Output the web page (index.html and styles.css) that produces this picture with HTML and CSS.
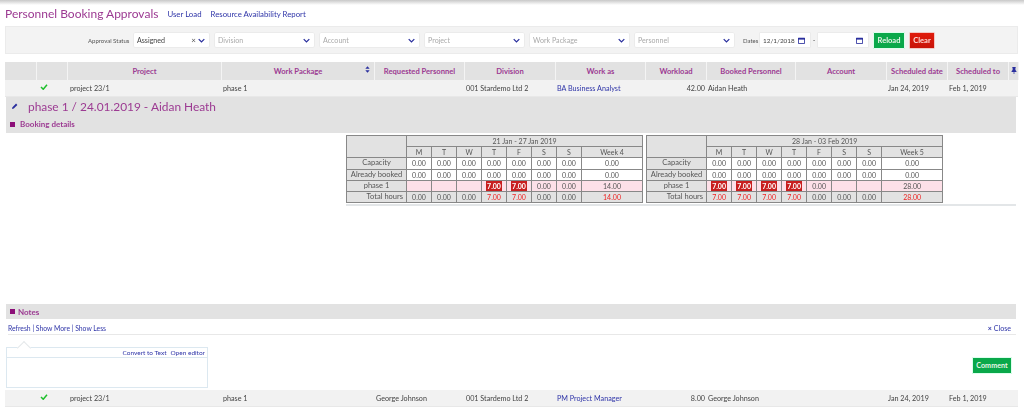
FILE: index.html
```html
<!DOCTYPE html>
<html lang="en">
<head>
<meta charset="utf-8">
<title>Personnel Booking Approvals</title>
<link rel="stylesheet" href="styles.css">
</head>
<body>
<div class="topshade"></div>
<header class="titlebar">
  <h1>Personnel Booking Approvals</h1>
  <a class="toplink first">User Load</a>
  <a class="toplink">Resource Availability Report</a>
</header>
<section class="filters">
  <span class="flabel status">Approval Status</span>
  <div class="select w75 value"><span class="sv">Assigned</span><span class="x">×</span><svg class="chev" viewBox="0 0 10 6"><path d="M1 1l4 4 4-4"/></svg></div>
  <div class="select"><span>Division</span><svg class="chev" viewBox="0 0 10 6"><path d="M1 1l4 4 4-4"/></svg></div>
  <div class="select"><span>Account</span><svg class="chev" viewBox="0 0 10 6"><path d="M1 1l4 4 4-4"/></svg></div>
  <div class="select"><span>Project</span><svg class="chev" viewBox="0 0 10 6"><path d="M1 1l4 4 4-4"/></svg></div>
  <div class="select"><span>Work Package</span><svg class="chev" viewBox="0 0 10 6"><path d="M1 1l4 4 4-4"/></svg></div>
  <div class="select"><span>Personnel</span><svg class="chev" viewBox="0 0 10 6"><path d="M1 1l4 4 4-4"/></svg></div>
  <span class="flabel dates">Dates</span>
  <div class="date"><span>12/1/2018</span><svg class="cal" viewBox="0 0 8 8"><path d="M.5 1.5h7v6h-7z" fill="none" stroke="#2a2f9e"/><path d="M0 1h8v2H0z" fill="#2a2f9e"/></svg></div>
  <span class="dash">-</span>
  <div class="date"><span></span><svg class="cal" viewBox="0 0 8 8"><path d="M.5 1.5h7v6h-7z" fill="none" stroke="#2a2f9e"/><path d="M0 1h8v2H0z" fill="#2a2f9e"/></svg></div>
  <button class="btn green reload">Reload</button>
  <button class="btn red clear">Clear</button>
</section>
<div class="grid-row head">
  <div></div><div></div>
  <div>Project</div>
  <div class="sortable">Work Package<svg class="sort" viewBox="0 0 6 8"><path d="M3 0l2.6 3H.4zM3 8L.4 5h5.2z"/></svg></div>
  <div>Requested Personnel</div><div>Division</div><div>Work as</div><div>Workload</div><div>Booked Personnel</div><div>Account</div><div>Scheduled date</div><div>Scheduled to</div>
  <div class="pin"><svg viewBox="0 0 8 10"><path d="M1.5 0h5v1H6v3.2L7.5 6v1h-3v3h-1V7h-3V6L2 4.2V1h-.5z"/></svg></div>
</div>
<div class="grid-row data">
  <div></div><div class="chk"><svg viewBox="0 0 10 8"><path d="M1 4l3 3 5-6"/></svg></div>
  <div class="proj">project 23/1</div><div>phase 1</div><div></div><div>001 Stardemo Ltd 2</div><div class="blue">BA Business Analyst</div><div class="num">42.00</div><div>Aidan Heath</div><div></div><div>Jan 24, 2019</div><div>Feb 1, 2019</div><div></div>
</div>
<section class="detail">
  <div class="detail-title"><svg class="pen" viewBox="0 0 8 8"><path d="M0 8l.6-2.4L5.4.8l1.8 1.8L2.4 7.4z"/></svg><h2>phase 1 / 24.01.2019 - Aidan Heath</h2></div>
  <div class="section-title"><i class="sq"></i>Booking details</div>
</section>
<section class="weeks">
  <table class="week">
    <colgroup><col class="c0"><col class="cd"><col class="cd"><col class="cd"><col class="cd"><col class="cd"><col class="cd"><col class="cd"><col class="cw"></colgroup>
    <tr><th rowspan="2"></th><th colspan="8">21 Jan - 27 Jan 2019</th></tr>
    <tr><th>M</th><th>T</th><th>W</th><th>T</th><th>F</th><th>S</th><th>S</th><th>Week 4</th></tr>
    <tr><th class="cap">Capacity</th><td>0.00</td><td>0.00</td><td>0.00</td><td>0.00</td><td>0.00</td><td>0.00</td><td>0.00</td><td>0.00</td></tr>
    <tr><th class="cap">Already booked</th><td>0.00</td><td>0.00</td><td>0.00</td><td>0.00</td><td>0.00</td><td>0.00</td><td>0.00</td><td>0.00</td></tr>
    <tr class="pink"><th class="cap">phase 1</th><td></td><td></td><td></td><td><b class="over">7.00</b></td><td><b class="over">7.00</b></td><td>0.00</td><td>0.00</td><td>14.00</td></tr>
    <tr class="total"><th class="tot">Total hours</th><td>0.00</td><td>0.00</td><td>0.00</td><td class="rd">7.00</td><td class="rd">7.00</td><td>0.00</td><td>0.00</td><td class="rd">14.00</td></tr>
  </table>
  <table class="week">
    <colgroup><col class="c0"><col class="cd"><col class="cd"><col class="cd"><col class="cd"><col class="cd"><col class="cd"><col class="cd"><col class="cw"></colgroup>
    <tr><th rowspan="2"></th><th colspan="8">28 Jan - 03 Feb 2019</th></tr>
    <tr><th>M</th><th>T</th><th>W</th><th>T</th><th>F</th><th>S</th><th>S</th><th>Week 5</th></tr>
    <tr><th class="cap">Capacity</th><td>0.00</td><td>0.00</td><td>0.00</td><td>0.00</td><td>0.00</td><td>0.00</td><td>0.00</td><td>0.00</td></tr>
    <tr><th class="cap">Already booked</th><td>0.00</td><td>0.00</td><td>0.00</td><td>0.00</td><td>0.00</td><td>0.00</td><td>0.00</td><td>0.00</td></tr>
    <tr class="pink"><th class="cap">phase 1</th><td><b class="over">7.00</b></td><td><b class="over">7.00</b></td><td><b class="over">7.00</b></td><td><b class="over">7.00</b></td><td>0.00</td><td></td><td></td><td>28.00</td></tr>
    <tr class="total"><th class="tot">Total hours</th><td class="rd">7.00</td><td class="rd">7.00</td><td class="rd">7.00</td><td class="rd">7.00</td><td>0.00</td><td>0.00</td><td>0.00</td><td class="rd">28.00</td></tr>
  </table>
</section>
<div class="rule"></div>
<section class="notes-band"><i class="sq"></i>Notes</section>
<div class="notes-links">
  <span><a>Refresh</a> | <a>Show More</a> | <a>Show Less</a></span>
  <a class="close"><span class="closex">×</span> Close</a>
</div>
<div class="composer">
  <div class="editor">
    <div class="editor-bar"><a>Convert to Text</a><a>Open editor</a></div>
  </div>
  <button class="btn green comment">Comment</button>
</div>
<div class="grid-row data last">
  <div></div><div class="chk"><svg viewBox="0 0 10 8"><path d="M1 4l3 3 5-6"/></svg></div>
  <div class="proj">project 23/1</div><div>phase 1</div><div>George Johnson</div><div>001 Stardemo Ltd 2</div><div class="blue">PM Project Manager</div><div class="num">8.00</div><div>George Johnson</div><div></div><div>Jan 24, 2019</div><div>Feb 1, 2019</div><div></div>
</div>
</body>
</html>
```
FILE: styles.css
```css
* { box-sizing: border-box; }
html, body { margin: 0; padding: 0; }
body {
  width: 1024px; height: 407px; overflow: hidden; background: #fff;
  font-family: Lato, "Open Sans", sans-serif; font-size: 7.2px; color: #444;
  filter: blur(.3px);
}
a { color: #2f35a8; }
.topshade { height: 5px; background: linear-gradient(#c8c8c8, #fff); }
.titlebar { height: 21px; padding: 0 0 5px 5px; display: flex; align-items: center; }
h1 { margin: 0; font-size: 12px; font-weight: 400; color: #9c3a92; }
.toplink { font-size: 7.8px; margin: 2px 0 0 9px; }
.filters {
  margin: 0 6px 0 5px; height: 28px; background: #f3f3f3; border: 1px solid #ebebeb;
  display: flex; align-items: center; padding-left: 82px;
}
.flabel { font-size: 6px; color: #555; white-space: nowrap; }
.status { width: 46px; }
.select {
  width: 99px; height: 14px; background: #fff; border-radius: 1px; margin-right: 6px;
  display: flex; align-items: center; padding: 0 3px; color: #aaa; font-size: 7.1px; box-shadow: 0 0 0 .5px #e4e4e4;
}
.select span:first-child { flex: 1; }
.w75 { width: 75px; color: #444; }
.x { color: #555; font-size: 8px; margin-right: 1px; }
.chev { width: 7px; height: 5px; margin: 0 1px; }
.chev path { fill: none; stroke: #2a2f9e; stroke-width: 1.8; }
.dates { margin-left: 3px; width: 17px; }
.date {
  width: 50px; height: 14px; background: #fff; display: flex; align-items: center; padding: 0 3px 0 3px;
  font-size: 6.4px; color: #444; box-shadow: 0 0 0 .5px #e4e4e4;
}
.date span { flex: 1; }
.cal { width: 7px; height: 7px; margin-right: 2px; }
.dash { width: 8px; text-align: center; }
.btn { border: 1px solid #dfe; border-radius: 1px; color: #e8f5e8; font: 700 7.5px Lato, sans-serif; padding: 0; }
.green { background: #0aa84a; }
.red { background: linear-gradient(#e01b0c, #c81408); border-color: #f3c8c4; color: #ffdcd8; }
.reload { width: 32px; height: 17px; margin-left: 5px; }
.clear { width: 26px; height: 17px; margin-left: 4px; }
.grid-row {
  display: grid; margin: 0 6px 0 5px;
  grid-template-columns: 32px 31px 154px 153px 90px 91px 90px 61px 89px 91px 61px 61px 10px;
}
.head { margin-top: 8px; height: 18px; }
.head > div {
  background: #e2e2e2; border-right: 1px solid #f4f4f4; color: #9c3a92; font-weight: 700; font-size: 7.6px;
  display: flex; align-items: center; justify-content: center; position: relative;
}
.sort { position: absolute; right: 4px; top: 4px; width: 5px; height: 7px; fill: #2a2f9e; }
.pin svg { width: 6px; height: 7px; fill: #2a2f9e; margin-bottom: 2px; }
.data { height: 17px; background: #f2f2f2; border-bottom: 1px solid #e8e8e8; }
.data > div { display: flex; align-items: center; padding: 1px 0 0 1px; overflow: hidden; white-space: nowrap; }
.data > .proj { padding-left: 2px; }
.data > .chk { padding: 0 0 0 3px; }
.chk svg { width: 8px; height: 6px; fill: none; stroke: #1ec02c; stroke-width: 2; margin-bottom: 2px; }
.blue { color: #2f35a8; }
.data > .num { justify-content: flex-end; padding-right: 2px; }
.detail { margin: 0 8px 0 6px; height: 36px; background: #e2e2e2; }
.detail-title { height: 18px; display: flex; align-items: center; padding-left: 6px; }
.pen { width: 6px; height: 6px; fill: #2a2f9e; margin-right: 10px; }
h2 { margin: 0; font-size: 11.9px; font-weight: 400; color: #9c3a92; }
.section-title { padding-left: 4px; margin-top: 1px; color: #9c3a92; font-weight: 700; font-size: 8px; display: flex; align-items: center; height: 16px; }
.sq { width: 5px; height: 5px; background: #8c0f78; margin-right: 5px; display: inline-block; }
.weeks { display: flex; gap: 3px; margin: 2px 0 0 346px; }
.week { width: 296px; table-layout: fixed; border-collapse: collapse; border: 1px solid #888; }
.c0 { width: 60px; } .cd { width: 25px; } .cw { width: 61px; }
.week th, .week td { border: 1px solid #888; padding: 0; height: 11.2px; line-height: 10px; font-size: 7px; text-align: center; font-weight: 400; white-space: nowrap; }
.week th { background: #e2e2e2; color: #555; }
.week th.cap, .week th.tot { font-size: 7.5px; }
.week td { background: #fff; color: #555; }
.week th.tot { text-align: right; padding-right: 3px; }
.pink td { background: #fde0e8; }
.over { display: block; width: 16px; height: 12px; line-height: 12px; margin: -1px auto; background: #c81e1e; color: #fff; font-weight: 700; }
.total td { background: #e2e2e2; }
.week td.rd { color: #ee2222; }
.rule { margin: 1px 8px 0 346px; height: 2px; background: #e3e6e8; }
.notes-band { margin: 98px 8px 0 6px; height: 15px; background: #e2e2e2; color: #9c3a92; font-weight: 700; font-size: 8px; display: flex; align-items: center; padding-left: 4px; }
.notes-band .sq { margin-right: 3px; }
.notes-links { margin: 0 8px 0 8px; height: 16px; padding-top: 3px; border-bottom: 1px solid #e8e8e8; display: flex; justify-content: space-between; align-items: center; color: #2f35a8; font-size: 6.8px; }
.close { padding-right: 5px; font-size: 7.1px; }
.closex { font-weight: 700; }
.composer { display: flex; justify-content: space-between; align-items: flex-start; margin: 12px 12px 0 6px; position: relative; }
.editor { width: 202px; height: 41px; border: 1px solid #dce8f0; position: relative; }
.editor::before { content: ""; position: absolute; left: 12px; top: -5px; width: 9px; height: 9px; transform: rotate(45deg); background: #fff; border: 1px solid #e4e8ea; border-width: 1px 0 0 1px; }
.editor-bar { height: 10px; border-bottom: 1px solid #dce8f0; display: flex; justify-content: flex-end; gap: 4px; padding-right: 2px; align-items: center; position: relative; font-size: 6.5px; }
.comment { width: 40px; height: 17px; margin-top: 10px; font-size: 7.2px; }
.last { margin-top: 2px; height: 17px; }
```
